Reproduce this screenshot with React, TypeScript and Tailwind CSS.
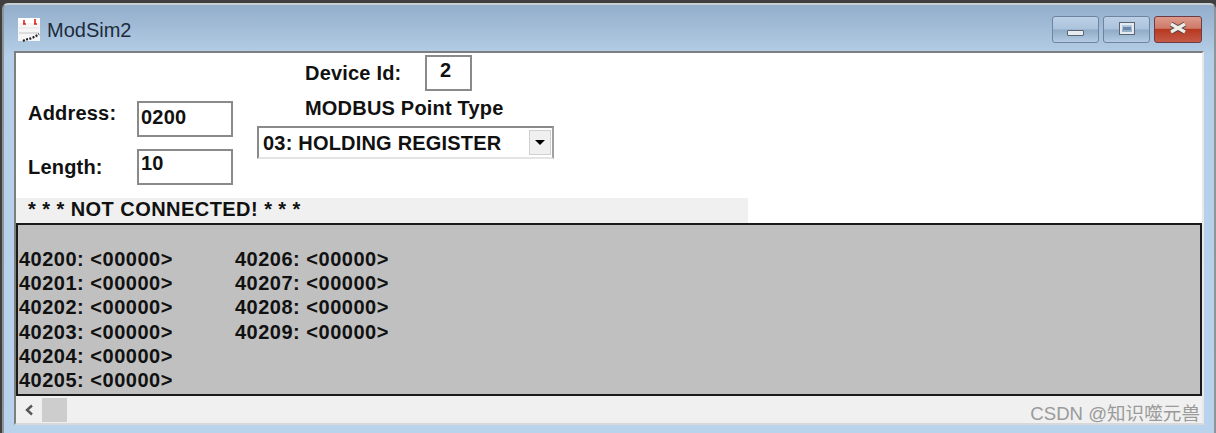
const registers = [
  '40200: <00000>', '40201: <00000>', '40202: <00000>', '40203: <00000>', '40204: <00000>',
  '40205: <00000>', '40206: <00000>', '40207: <00000>', '40208: <00000>', '40209: <00000>',
];

const AppIcon = () => (
  <svg width="24" height="26" viewBox="0 0 24 26">
    <rect x="0" y="1" width="22" height="23" fill="#f6f6f6" />
    <rect x="0" y="1" width="22" height="5" fill="#ffffff" />
    <path d="M6 3v4M5 7h3M17 2v5M16 7h3" stroke="#e0241c" strokeWidth="1.6" />
    <path d="M1 16h20" stroke="#c4c4c4" />
    <path d="M1 11h20" stroke="#e4e4e4" />
    <path d="M5 24l3-1.5 3-.5 4-1.5 3-1.5 3-2" stroke="#222" strokeWidth="2.2" strokeDasharray="2 1.4" fill="none" />
  </svg>
);

const WinButton = ({ children, red }: { children: React.ReactNode; red?: boolean }) => (
  <div className={`relative flex h-[27px] items-center justify-center overflow-hidden rounded-[3px] border ${red ? 'w-[48px] border-[#6e3a46] bg-[linear-gradient(#dd9a8c_0%,#cf7a68_45%,#b8391f_50%,#c45a48_100%)]' : 'w-[47px] border-[#6f84a0] bg-[linear-gradient(#bcd0e6_0%,#abc3dc_48%,#8fabc6_52%,#b4cbe3_100%)]'}`}>
    {children}
  </div>
);

const Field = ({ value, className }: { value: string; className: string }) => (
  <div className={`border-2 border-[#8a8a8a] bg-white leading-none text-[#111] ${className}`}>{value}</div>
);

export default function App() {
  return (
    <div className="h-[433px] w-[1216px] overflow-hidden bg-[#3f3f3f] pt-[3px] font-['Liberation_Sans',sans-serif] font-bold text-[20px] tracking-[0.2px] text-[#111]">
      <div className="ml-[2px] flex h-[430px] flex-col rounded-t-[6px] border-2 border-b-0 border-[#8f9499] border-t-[#c9ced3] bg-[linear-gradient(#93aecb_0%,#b6cfe8_12%,#b9d3ec_100%)] pl-[10px] pr-[10px]">
        <div className="flex h-[46px] shrink-0 items-center justify-between">
          <div className="flex items-center gap-[5px] pl-[4px] pt-[4px]">
            <AppIcon />
            <span className="text-[20px] font-normal tracking-normal text-[#1c2b3c]">ModSim2</span>
          </div>
          <div className="flex gap-[4px] pr-[2px] pt-[3px]">
            <WinButton>
              <div className="mt-[7px] h-[6px] w-[17px] rounded-[1px] border border-[#5a6472] bg-[#e6ebf0]" />
            </WinButton>
            <WinButton>
              <div className="mb-[3px] flex h-[11px] w-[14px] items-center justify-center border-2 border-[#e6ebf0] outline outline-1 outline-[#5a6472]">
                <div className="h-[3px] w-[8px] bg-[#6b86a6]" />
              </div>
            </WinButton>
            <WinButton red>
              <svg className="mb-[3px]" width="20" height="12" viewBox="0 0 20 12">
                <path d="M3 2l14 8M17 2L3 10" stroke="#4a3a3c" strokeWidth="5" />
                <path d="M3 2l14 8M17 2L3 10" stroke="#f0ece8" strokeWidth="3.4" />
              </svg>
            </WinButton>
          </div>
        </div>

        <div className="flex h-[374px] shrink-0 flex-col border-2 border-[#7e7e7e] border-r-[#e8e8e8] border-b-[#d8d8d8] bg-white">
          <div className="flex h-[145px] shrink-0">
            <div className="flex w-[241px] shrink-0 flex-col pl-[12px] pt-[48px]">
              <div className="flex h-[36px] items-start">
                <span className="-mt-[2px] w-[109px] leading-[28px]">Address:</span>
                <Field value="0200" className="flex h-[36px] w-[96px] items-center pb-[5px] pl-[2px]" />
              </div>
              <div className="mt-[12px] flex h-[36px] items-start">
                <span className="w-[109px] pt-[3px]">Length:</span>
                <Field value="10" className="h-[36px] w-[96px] pl-[2px] pt-[2px]" />
              </div>
            </div>
            <div className="flex flex-col pt-[2px]">
              <div className="flex h-[36px] items-center pl-[48px]">
                <span className="w-[120px]">Device Id:</span>
                <Field value="2" className="h-[36px] w-[47px] pl-[13px] pt-[3px]" />
              </div>
              <div className="pl-[48px] pt-[6px] leading-[22px]">MODBUS Point Type</div>
              <div className="mt-[7px] flex h-[33px] w-[297px] items-center justify-between border-2 border-[#8a8a8a] border-b-[#e4e4e4] border-r-[#a0a0a0] pl-[4px] pr-[1px]">
                <span>03: HOLDING REGISTER</span>
                <div className="flex h-[25px] w-[22px] items-center justify-center border border-[#d0d0d0] bg-[#f0f0f0]">
                  <div className="h-0 w-0 border-x-[5px] border-t-[5px] border-x-transparent border-t-black" />
                </div>
              </div>
            </div>
          </div>
          <div className="h-[25px] w-[732px] shrink-0 bg-[#f0f0f0] pl-[12px] leading-[23px] tracking-[0.45px]">* * * NOT CONNECTED! * * *</div>
          <div className="grid h-[173px] shrink-0 grid-flow-col grid-rows-[repeat(6,24.2px)] content-start justify-start border-2 border-[#1a1a1a] bg-[#c0c0c0] pl-[1px] pt-[22px] auto-cols-[216px] leading-[24px] tracking-[0.5px]">
            {registers.map((r) => (
              <div key={r} className="whitespace-nowrap">{r}</div>
            ))}
          </div>
          <div className="relative flex flex-1 items-center bg-[#f0f0f0]">
            <svg className="ml-[8px]" width="10" height="12" viewBox="0 0 10 12">
              <path d="M8 1.5L3 6l5 4.5" stroke="#555" strokeWidth="2.4" fill="none" />
            </svg>
            <div className="ml-[8px] h-[24px] w-[25px] bg-[#cdcdcd]" />
            <span className="absolute right-[2px] top-[4px] font-['Liberation_Sans','Noto_Sans_CJK_SC',sans-serif] text-[18.6px] font-normal tracking-normal text-[#9a9a9a]">CSDN @知识噬元兽</span>
          </div>
        </div>
      </div>
    </div>
  );
}
